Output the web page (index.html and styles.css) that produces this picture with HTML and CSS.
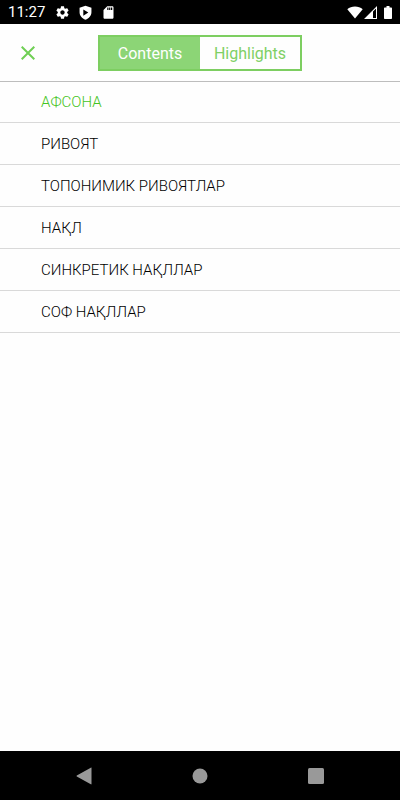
FILE: index.html
```html
<!DOCTYPE html>
<html lang="uz-Cyrl">
<head>
    <meta charset="UTF-8">
    <meta name="viewport" content="width=device-width, initial-scale=1.0">
    <title>Contents</title>
    <link rel="stylesheet" href="styles.css">
</head>
<body>
    <div class="status-bar">
        <span class="clock">11:27</span>
        <div class="status-icons">
            <svg width="15" height="15" viewBox="0 0 24 24"><path fill="#fff" d="M19.43 12.98c.04-.32.07-.64.07-.98s-.03-.66-.07-.98l2.11-1.65c.19-.15.24-.42.12-.64l-2-3.46c-.12-.22-.39-.3-.61-.22l-2.49 1c-.52-.4-1.08-.73-1.69-.98l-.38-2.65C14.46 2.18 14.25 2 14 2h-4c-.25 0-.46.18-.49.42l-.38 2.65c-.61.25-1.17.59-1.69.98l-2.49-1c-.23-.09-.49 0-.61.22l-2 3.46c-.13.22-.07.49.12.64l2.11 1.65c-.04.32-.07.65-.07.98s.03.66.07.98l-2.11 1.65c-.19.15-.24.42-.12.64l2 3.46c.12.22.39.3.61.22l2.49-1c.52.4 1.08.73 1.69.98l.38 2.65c.03.24.24.42.49.42h4c.25 0 .46-.18.49-.42l.38-2.65c.61-.25 1.17-.59 1.69-.98l2.49 1c.23.09.49 0 .61-.22l2-3.46c.12-.22.07-.49-.12-.64l-2.11-1.65zM12 15.5c-1.93 0-3.5-1.57-3.5-3.5s1.57-3.5 3.5-3.5 3.5 1.57 3.5 3.5-1.57 3.5-3.5 3.5z"/></svg>
            <svg width="15" height="15" viewBox="0 0 24 24"><path fill="#fff" fill-rule="evenodd" d="M12 1 2.5 4.5v7c0 5.5 4 10 9.5 12 5.5-2 9.5-6.5 9.5-12v-7zM8.5 7v10l8-5z"/></svg>
            <svg width="15" height="15" viewBox="0 0 24 24"><path fill="#fff" d="M18 2h-8L4 8v12c0 1.1.9 2 2 2h12c1.1 0 2-.9 2-2V4c0-1.1-.9-2-2-2zm-6 6h-2V4h2v4zm3 0h-2V4h2v4zm3 0h-2V4h2v4z"/></svg>
        </div>
        <div class="signal-icons">
            <svg width="16" height="13" viewBox="0 0 16 13"><path fill="#fff" d="M8 12.5.3 3.2C2.4 1.5 5 .5 8 .5s5.6 1 7.7 2.7z"/></svg>
            <svg width="13" height="13" viewBox="0 0 13 13"><path fill="#fff" fill-rule="evenodd" d="M0 13 13 0v13zM9 5.5V12h3V2.5z"/></svg>
            <svg class="battery" width="8" height="13" viewBox="0 0 8 13"><path fill="#fff" d="M2.5 0h3v1.5H7c.6 0 1 .4 1 1V12c0 .6-.4 1-1 1H1c-.6 0-1-.4-1-1V2.5c0-.6.4-1 1-1h1.5z"/></svg>
        </div>
    </div>

    <header class="header">
        <button class="close-btn" type="button" aria-label="Close">
            <svg width="14" height="14" viewBox="0 0 14 14"><path fill="none" stroke="#6fcf54" stroke-width="2" d="M.7.7l12.6 12.6M13.3.7.7 13.3"/></svg>
        </button>
        <div class="tabs">
            <button class="tab active" type="button">Contents</button>
            <button class="tab" type="button">Highlights</button>
        </div>
    </header>

    <main class="content">
        <ul class="chapters">
            <li><a href="#" class="current">АФСОНА</a></li>
            <li><a href="#">РИВОЯТ</a></li>
            <li><a href="#">ТОПОНИМИК РИВОЯТЛАР</a></li>
            <li><a href="#">НАҚЛ</a></li>
            <li><a href="#">СИНКРЕТИК НАҚЛЛАР</a></li>
            <li><a href="#">СОФ НАҚЛЛАР</a></li>
        </ul>
    </main>

    <nav class="nav-bar">
        <button type="button" aria-label="Back">
            <svg width="16" height="18" viewBox="0 0 16 18"><path fill="#999" d="M15.5 1v16c0 .4-.4.5-.7.3L.8 9.5c-.4-.3-.4-.7 0-1L14.8.7c.3-.2.7-.1.7.3z"/></svg>
        </button>
        <button type="button" aria-label="Home">
            <svg width="16" height="16" viewBox="0 0 16 16"><circle cx="8" cy="8" r="7.5" fill="#999"/></svg>
        </button>
        <button type="button" aria-label="Recent apps">
            <svg width="16" height="16" viewBox="0 0 16 16"><rect width="16" height="16" rx="1.5" fill="#999"/></svg>
        </button>
    </nav>
</body>
</html>
```
FILE: styles.css
```css
* {
    margin: 0;
    padding: 0;
    box-sizing: border-box;
}

body {
    font-family: Roboto, "Noto Sans", sans-serif;
    background: #fefefe;
    color: #000;
    min-height: 100vh;
    display: flex;
    flex-direction: column;
}

button {
    border: none;
    background: none;
    font-family: inherit;
    cursor: pointer;
}

svg {
    display: block;
}

/* Status bar */
.status-bar {
    display: flex;
    align-items: center;
    height: 24px;
    padding: 0 8px;
    background: #000;
    color: #fff;
}

.clock {
    padding-top: 1px;
    font-size: 15px;
    line-height: 23px;
}

.status-icons {
    display: flex;
    gap: 8px;
    margin-left: 10px;
}

.signal-icons {
    display: flex;
    gap: 1px;
    margin-left: auto;
}

.battery {
    margin-left: 6px;
}

/* Header */
.header {
    display: grid;
    grid-template-columns: 1fr auto 1fr;
    align-items: center;
    height: 58px;
    padding: 0 8px;
    border-bottom: 1px solid #bdbdbd;
}

.close-btn {
    display: flex;
    align-items: center;
    justify-content: center;
    width: 40px;
    height: 40px;
}

.tabs {
    display: flex;
    width: 204px;
    height: 36px;
    border: 2px solid #7dce61;
}

.tab {
    flex: 1;
    padding-top: 2px;
    color: #7fd065;
    font-size: 16px;
}

.tab.active {
    background: #8cd576;
    color: #fff;
}

/* Chapter list */
.content {
    flex: 1;
}

.chapters {
    list-style: none;
    margin-top: -1px;
}

.chapters a {
    display: block;
    padding: 2px 41px 0;
    border-bottom: 1px solid #d9d9d9;
    color: #000;
    font-size: 15px;
    font-weight: 300;
    line-height: 39px;
    text-decoration: none;
}

.chapters .current {
    color: #45c422;
}

/* Navigation bar */
.nav-bar {
    display: flex;
    height: 49px;
    padding: 0 26px;
    background: #000;
}

.nav-bar button {
    flex: 1;
    display: flex;
    align-items: center;
    justify-content: center;
}
```
